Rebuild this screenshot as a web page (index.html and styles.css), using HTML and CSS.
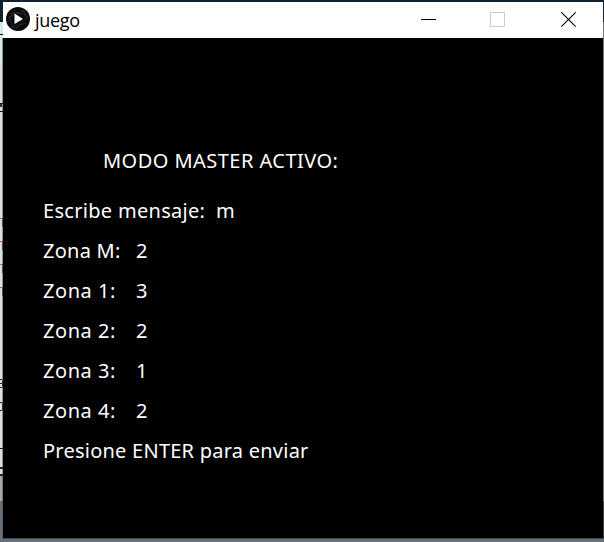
FILE: index.html
```html
<!DOCTYPE html>
<html lang="es">
<head>
<meta charset="utf-8">
<title>juego</title>
<link rel="stylesheet" href="styles.css">
</head>
<body>
<div class="desktop">
  <div class="behind">
    <i class="mark tab"></i>
    <i class="mark z-top"></i><i class="mark z-diagonal"></i><i class="mark z-base"></i>
    <i class="mark code c1"></i><i class="mark code c2"></i><i class="mark code c3"></i><i class="mark code c4"></i>
    <i class="mark edge g1"></i><i class="mark edge g2"></i>
    <i class="mark dash"></i>
    <i class="mark edge g3"></i>
  </div>
  <main class="window">
    <header class="titlebar">
      <svg class="logo" viewBox="0 0 24 24">
        <circle cx="12" cy="12" r="12" fill="#090a0b"/>
        <g fill="none" stroke="#34383b" stroke-width=".6">
          <path d="M3 7 20 4M2 15 9 3M5 20 21 16M8 22 3 10M16 2 22 12M10 22 22 9M3 10 12 6 20 8"/>
        </g>
        <path d="M8.5 6.5 17 12 8.5 17Z" fill="#fff"/>
      </svg>
      <span class="title">juego</span>
      <div class="controls">
        <svg viewBox="0 0 16 16" shape-rendering="crispEdges"><path d="M0 7.5H15" stroke="#000"/></svg>
        <svg viewBox="0 0 16 16" shape-rendering="crispEdges"><path d="M.5.5H14.5V14.5H.5Z" fill="none" stroke="#ccc"/></svg>
        <svg viewBox="0 0 16 16"><path d="M.3.3 14.7 14.7M14.7.3.3 14.7" stroke="#000" stroke-width="1.1"/></svg>
      </div>
    </header>
    <section class="canvas">
      <h1 class="heading">MODO MASTER ACTIVO:</h1>
      <p class="row message"><span class="label">Escribe mensaje:</span><span>m</span></p>
      <p class="row master"><span class="label">Zona M:</span><span>2</span></p>
      <p class="row"><span class="label">Zona 1:</span><span>3</span></p>
      <p class="row"><span class="label">Zona 2:</span><span>2</span></p>
      <p class="row"><span class="label">Zona 3:</span><span>1</span></p>
      <p class="row"><span class="label">Zona 4:</span><span>2</span></p>
      <p class="row send">Presione ENTER para enviar</p>
    </section>
  </main>
</div>
</body>
</html>
```
FILE: styles.css
```css
* { box-sizing: border-box; }
body { margin: 0; overflow: hidden; }

.desktop {
  display: grid;
  grid-template-columns: 3px 600px 1px;
  width: 604px;
  height: 542px;
  background:
    linear-gradient(#122130, #122130) 0 0 / 604px 2px no-repeat,
    linear-gradient(#4a4a4a, #4a4a4a) 3px 538px / 601px 1px no-repeat,
    linear-gradient(#132433 22px, #777 22px 501px, #3b3f44 501px) 603px 0 / 1px 539px no-repeat,
    #66717b;
}

.behind {
  position: relative;
  width: 3px;
  height: 542px;
  overflow: hidden;
  background: linear-gradient(#122130 22px, #d7e8e7 22px 65px, #dcdfdf 65px 476px, #aaa8a5 476px 501px, #66717b 501px);
}
.behind::after {
  content: "";
  position: absolute;
  top: 38px;
  right: 0;
  width: 1px;
  height: 501px;
  background: rgba(70, 70, 70, .5);
}
.mark { position: absolute; display: block; }
.tab { top: 34px; left: 0; width: 3px; height: 1px; background: #111; }
.z-top { top: 103px; left: 0; width: 3px; height: 1px; background: #111; }
.z-diagonal { top: 104px; left: 0; width: 2px; height: 3px; background: #333; }
.z-base { top: 111px; left: 0; width: 3px; height: 1px; background: #111; }
.code { left: 0; width: 3px; height: 9px; border-top: 1px solid #c96527; border-right: 1px solid #8c4620; }
.c1 { top: 218px; }
.c2 { top: 241px; }
.c3 { top: 264px; }
.c4 { top: 287px; }
.edge { left: 0; width: 3px; height: 9px; border: solid #222; border-width: 1px 1px 1px 0; border-radius: 0 2px 2px 0; }
.g1 { top: 379px; background: linear-gradient(transparent 3px, #222 3px 4px, transparent 4px); }
.g2 { top: 402px; }
.g3 { top: 467px; border-width: 2px 0 2px 0; border-radius: 0; }
.dash { top: 448px; left: 0; width: 3px; height: 1px; background: #111; }

.window { width: 600px; height: 536px; margin-top: 2px; background: #000; }
.titlebar {
  display: flex;
  align-items: center;
  height: 36px;
  padding-left: 3px;
  background: #fff;
}
.logo { width: 24px; height: 24px; margin-top: -2px; }
.title {
  margin-left: 5px;
  font: 18px/24px "Open Sans", sans-serif;
  letter-spacing: -.3px;
  color: #000;
}
.controls { display: flex; gap: 55px; margin: 0 26px 0 auto; }
.controls svg { width: 16px; height: 16px; }
.controls svg:first-child { margin-right: -2px; }

.canvas {
  height: 500px;
  padding: 103px 0 0 40px;
  font: 20px/40px "Noto Sans", sans-serif;
  color: #fff;
}
.heading { margin: 0 0 10px 60px; font: inherit; letter-spacing: .46px; white-space: pre; }
.row { display: flex; height: 40px; margin: 0; white-space: pre; letter-spacing: .55px; }
.label { width: 93px; }
.message { letter-spacing: .3px; }
.message .label { width: 173px; }
.master { letter-spacing: .25px; }
.send { letter-spacing: .24px; }
```
